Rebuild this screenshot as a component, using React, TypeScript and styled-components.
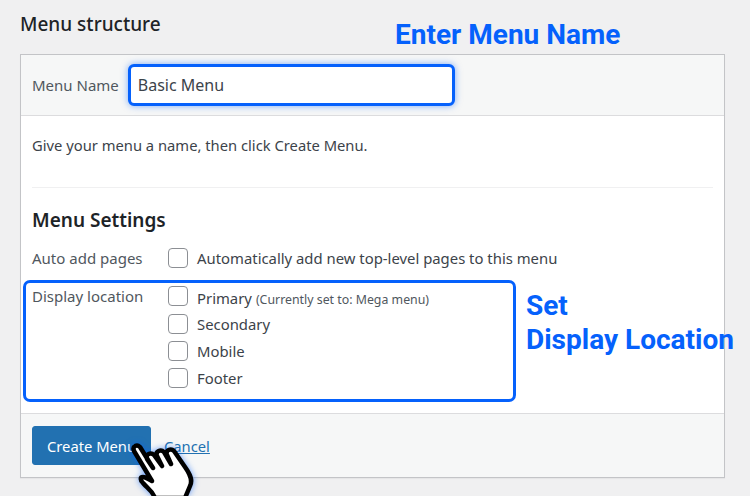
import * as React from "react";
import styled, { createGlobalStyle } from "styled-components";

const GlobalStyle = createGlobalStyle`
  html, body {
    margin: 0;
    background: #f0f0f1;
    overflow: hidden;
  }
  body {
    color: #3c434a;
    font-family: "Noto Sans", "Open Sans", sans-serif;
  }
`;

const Page = styled.div`
  height: 496px;
  overflow: hidden;
  padding: 12px 25px 0 20px;
  position: relative;
  width: 750px;
  box-sizing: border-box;
`;

const Title = styled.h2`
  color: #1d2327;
  font-size: 19px;
  font-weight: 500;
  line-height: 25px;
  margin: 0 0 17px;
`;

const Callout = styled.div<{ $top: number; $left: number }>`
  color: #0561fc;
  font-family: Roboto, sans-serif;
  font-size: 28px;
  font-weight: 700;
  left: ${(p) => p.$left}px;
  line-height: 34px;
  position: absolute;
  top: ${(p) => p.$top}px;
  white-space: nowrap;
`;

const Panel = styled.div`
  background: #fff;
  border: 1px solid #c3c4c7;
  box-shadow: 0 1px 1px rgba(0, 0, 0, 0.04);
  box-sizing: border-box;
  display: flex;
  flex-direction: column;
  height: 424px;
`;

const Header = styled.div`
  align-items: center;
  background: #f6f7f7;
  border-bottom: 1px solid #dcdcde;
  display: flex;
  flex: 0 0 60px;
  gap: 9px;
  padding: 0 11px;
`;

const NameLabel = styled.label`
  color: #50575e;
  font-size: 15px;
`;

const NameInput = styled.div`
  background: #fff;
  border: 3px solid #0561fc;
  border-radius: 6px;
  box-shadow: 0 0 7px rgba(5, 97, 252, 0.5);
  box-sizing: border-box;
  color: #3c434a;
  font-size: 16px;
  height: 42px;
  line-height: 36px;
  padding-left: 7px;
  width: 327px;
`;

const Body = styled.div`
  flex: 1;
  padding: 0 11px;
`;

const Intro = styled.p`
  border-bottom: 1px solid #f0f0f1;
  font-size: 14.75px;
  line-height: 20px;
  margin: 0;
  padding: 19px 0 32px;
`;

const SettingsTitle = styled.h3`
  color: #1d2327;
  font-size: 19px;
  font-weight: 600;
  line-height: 25px;
  margin: 20px 0 14px;
`;

const SettingRow = styled.div`
  display: grid;
  grid-template-columns: 136px 1fr;
`;

const AutoRow = styled(SettingRow)`
  margin-bottom: 11px;
`;

const LocationBox = styled(SettingRow)`
  border: 3px solid #0561fc;
  border-radius: 7px;
  box-sizing: border-box;
  height: 122px;
  margin: 0 0 0 -9px;
  padding: 2px 0 0 6px;
  width: 493px;
`;

const RowLabel = styled.div`
  color: #50575e;
  font-size: 15px;
  line-height: 22px;
`;

const OptionList = styled.div`
  display: flex;
  flex-direction: column;
  gap: 5px;
`;

const Option = styled.div`
  align-items: center;
  display: flex;
  font-size: 14.87px;
  gap: 9px;
  height: 22px;
`;

const FirstOption = styled(Option)`
  margin-bottom: 1px;
`;

const OptionText = styled.span`
  padding-top: 3px;
`;

const Checkbox = styled.span`
  background: #fff;
  border: 1px solid #8c8f94;
  border-radius: 4px;
  box-sizing: border-box;
  flex: none;
  height: 20px;
  width: 20px;
`;

const Note = styled.span`
  color: #50575e;
  font-size: 12.35px;
  margin-left: 4px;
`;

const Footer = styled.div`
  align-items: center;
  background: #f6f7f7;
  border-top: 1px solid #dcdcde;
  box-sizing: border-box;
  display: flex;
  flex: 0 0 64px;
  gap: 13px;
  padding: 0 11px;
`;

const CreateButton = styled.button`
  background: #2271b1;
  border: 1px solid #2271b1;
  border-radius: 3px;
  color: #fff;
  font-family: inherit;
  font-size: 14.75px;
  height: 39px;
  padding: 0;
  width: 119px;
`;

const CancelLink = styled.a`
  color: #2271b1;
  font-size: 14.75px;
  text-decoration: underline;
`;

const Hand = styled.svg`
  filter: drop-shadow(0 0 3px rgba(5, 97, 252, 0.6));
  left: 125px;
  position: absolute;
  top: 436px;
`;

function PointerHand() {
  return (
    <Hand width="75" height="60" viewBox="0 0 75 60" aria-hidden="true">
      <path
        d="M9 15 C7 10 12 8 15 11 L28 32 L22 23 C20 18 26 16 29 19 L37 30 L32 20 C30 15 36 13 39 16 L46 28 L42 19 C40 14 46 12 49 15 L60 31 C65 38 68 44 65 50 L60 62 L30 62 C27 54 22 52 18 47 C15 44 15 41 18 41 C21 41 24 44 27 45 Z"
        fill="#fff"
        stroke="#000"
        strokeLinejoin="round"
        strokeWidth="4.5"
      />
    </Hand>
  );
}

export default function App() {
  const locations = ["Secondary", "Mobile", "Footer"];

  return (
    <Page>
      <GlobalStyle />
      <Title>Menu structure</Title>
      <Callout $top={18} $left={395}>Enter Menu Name</Callout>

      <Panel>
        <Header>
          <NameLabel>Menu Name</NameLabel>
          <NameInput>Basic Menu</NameInput>
        </Header>

        <Body>
          <Intro>Give your menu a name, then click Create Menu.</Intro>
          <SettingsTitle>Menu Settings</SettingsTitle>

          <AutoRow>
            <RowLabel>Auto add pages</RowLabel>
            <Option>
              <Checkbox />
              Automatically add new top-level pages to this menu
            </Option>
          </AutoRow>

          <LocationBox>
            <RowLabel>Display location</RowLabel>
            <OptionList>
              <FirstOption>
                <Checkbox />
                <OptionText>
                  Primary<Note>(Currently set to: Mega menu)</Note>
                </OptionText>
              </FirstOption>
              {locations.map((name) => (
                <Option key={name}>
                  <Checkbox />
                  {name}
                </Option>
              ))}
            </OptionList>
          </LocationBox>
        </Body>

        <Footer>
          <CreateButton>Create Menu</CreateButton>
          <CancelLink>Cancel</CancelLink>
        </Footer>
      </Panel>

      <Callout $top={289} $left={526}>
        Set
        <br />
        Display Location
      </Callout>
      <PointerHand />
    </Page>
  );
}
